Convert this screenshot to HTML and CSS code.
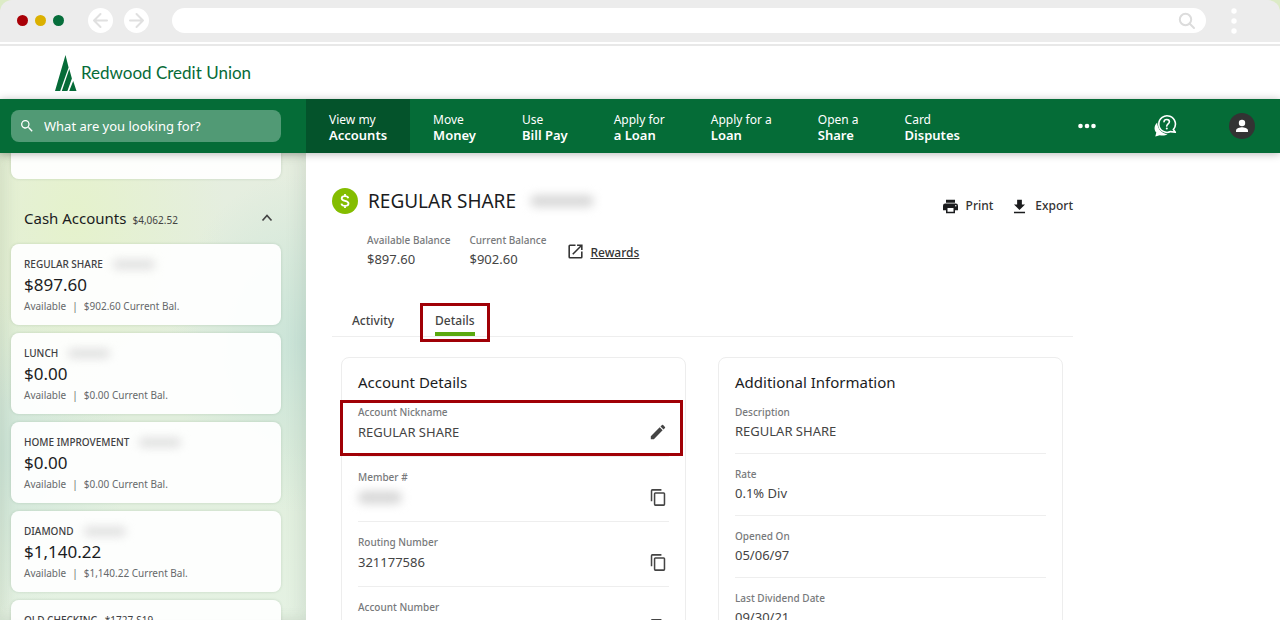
FILE: index.html
```html
<!DOCTYPE html>
<html lang="en">
<head>
<meta charset="utf-8">
<title>Redwood Credit Union</title>
<link rel="stylesheet" href="styles.css">
</head>
<body>
<div class="window">
  <div class="chrome-bar">
    <div class="lights"><span class="light red"></span><span class="light yellow"></span><span class="light green"></span></div>
    <div class="arrows">
      <button class="arrow" aria-label="Back"><svg width="25" height="25" viewBox="0 0 25 25"><path d="M19 12.500H6M12.500 6 6 12.500l6.500 6.500"/></svg></button>
      <button class="arrow" aria-label="Forward"><svg width="25" height="25" viewBox="0 0 25 25"><path d="M6 12.500h13M12.500 6l6.500 6.500-6.500 6.500"/></svg></button>
    </div>
    <div class="address">
      <input class="address-input" type="text" aria-label="Address">
      <svg width="18" height="18" viewBox="0 0 18 18"><circle cx="7.500" cy="7.500" r="5.700"/><path d="m11.500 11.500 4.500 4.500"/></svg>
    </div>
    <button class="kebab" aria-label="Menu"><svg width="6" height="26" viewBox="0 0 6 26"><circle cx="3" cy="3" r="2.700"/><circle cx="3" cy="13" r="2.700"/><circle cx="3" cy="23" r="2.700"/></svg></button>
  </div>
  <header class="brand">
    <a class="logo" href="#">
      <svg width="22" height="36" viewBox="0 0 22 36"><path d="M10.500 0 13.600 12.500 5.200 36H0zM14.300 14l2.600 9.500L12.400 36H6.800zM18.200 26 21.500 36H14.200z"/></svg>
      <span>Redwood Credit Union</span>
    </a>
  </header>
  <nav class="nav">
    <div class="nav-search">
      <label class="search">
        <svg width="16" height="16" viewBox="0 0 24 24"><path d="M15.500 14h-.8l-.3-.3A6.500 6.500 0 1 0 13.700 14.400l.3.300v.8l5 5 1.500-1.500zm-6 0a4.500 4.500 0 1 1 0-9 4.500 4.500 0 0 1 0 9z"/></svg>
        <input type="text" placeholder="What are you looking for?" aria-label="Search">
      </label>
    </div>
    <div class="nav-items">
      <a class="nav-item active" href="#">View my<b>Accounts</b></a>
      <a class="nav-item" href="#">Move<b>Money</b></a>
      <a class="nav-item" href="#">Use<b>Bill Pay</b></a>
      <a class="nav-item" href="#">Apply for<b>a Loan</b></a>
      <a class="nav-item" href="#">Apply for a<b>Loan</b></a>
      <a class="nav-item" href="#">Open a<b>Share</b></a>
      <a class="nav-item" href="#">Card<b>Disputes</b></a>
    </div>
    <div class="nav-tools">
      <button class="tool more" aria-label="More"><svg width="18" height="6" viewBox="0 0 18 6"><circle cx="2.500" cy="3" r="2.300"/><circle cx="9" cy="3" r="2.300"/><circle cx="15.500" cy="3" r="2.300"/></svg></button>
      <button class="tool" aria-label="Help"><svg width="24" height="24" viewBox="0 0 24 24"><path d="M4.200 8.500C1 11.500.8 16 3.300 18.600L2.300 22.500l4.500-1.300c3 .8 6 .2 7.700-1.300C9.500 20 4.500 15.500 4.200 8.500z"/><path class="line" d="M20.300 15.600A8.300 8.300 0 1 0 17.600 17.600L22.300 18.300z"/><path class="line" d="M11 7.700c.2-3 5.400-3 5.400.1 0 2-2.600 2.200-2.600 4.300"/><circle cx="13.800" cy="14.500" r="1"/></svg></button>
      <button class="tool" aria-label="Profile"><svg width="26" height="26" viewBox="0 0 26 26"><circle class="dark" cx="13" cy="13" r="13"/><circle cx="13" cy="10" r="3.200"/><path d="M7 19v-1.500c0-2.200 4-3.300 6-3.300s6 1.100 6 3.300V19z"/></svg></button>
    </div>
  </nav>
  <div class="body">
    <aside class="sidebar">
      <div class="acct-card cut"></div>
      <button class="group-head">
        <span class="group-name">Cash Accounts</span><span class="group-sum">$4,062.52</span>
        <svg width="12" height="12" viewBox="0 0 12 12"><path d="m1.500 8.500 4.500-5 4.500 5"/></svg>
      </button>
      <div class="accounts">
        <a class="acct-card" href="#"><span class="acct-name">REGULAR SHARE <i class="redacted"></i></span><span class="amount">$897.60</span><span class="sub"><span>Available</span><span>|</span><span>$902.60 Current Bal.</span></span></a>
        <a class="acct-card" href="#"><span class="acct-name">LUNCH <i class="redacted"></i></span><span class="amount">$0.00</span><span class="sub"><span>Available</span><span>|</span><span>$0.00 Current Bal.</span></span></a>
        <a class="acct-card" href="#"><span class="acct-name">HOME IMPROVEMENT <i class="redacted"></i></span><span class="amount">$0.00</span><span class="sub"><span>Available</span><span>|</span><span>$0.00 Current Bal.</span></span></a>
        <a class="acct-card" href="#"><span class="acct-name">DIAMOND <i class="redacted"></i></span><span class="amount">$1,140.22</span><span class="sub"><span>Available</span><span>|</span><span>$1,140.22 Current Bal.</span></span></a>
        <a class="acct-card" href="#"><span class="acct-name">OLD CHECKING <small>*1727-S19</small></span></a>
      </div>
    </aside>
    <main class="main">
      <div class="content">
        <div class="title-row">
          <svg class="coin" width="26" height="26" viewBox="0 0 26 26"><circle cx="13" cy="13" r="13"/><path d="M16.300 10.200C16 8.700 14.700 8.100 13 8.100c-1.800 0-3.300.8-3.300 2.300 0 3.300 6.800 1.600 6.800 5.100 0 1.600-1.500 2.400-3.500 2.400-1.900 0-3.300-.7-3.600-2.300M13 6v2M13 18v2"/></svg>
          <h1>REGULAR SHARE</h1><i class="redacted wide"></i>
          <div class="actions">
            <button class="action"><svg width="15" height="15" viewBox="2 2 20 20"><path d="M19 8H5a3 3 0 0 0-3 3v6h4v4h12v-4h4v-6a3 3 0 0 0-3-3zm-3 11H8v-5h8zm3-7a1 1 0 1 1 0-2 1 1 0 0 1 0 2zM18 3H6v4h12z"/></svg>Print</button>
            <button class="action"><svg width="15" height="15" viewBox="3 2 18 19"><path d="M19 9h-4V3H9v6H5l7 7zM5 18v2h14v-2z"/></svg>Export</button>
          </div>
        </div>
        <div class="balances">
          <dl><dt>Available Balance</dt><dd>$897.60</dd></dl>
          <dl><dt>Current Balance</dt><dd>$902.60</dd></dl>
          <a class="rewards" href="#"><svg width="15" height="15" viewBox="2.500 2.500 19 19"><path d="M19 19H5V5h7V3H5a2 2 0 0 0-2 2v14a2 2 0 0 0 2 2h14a2 2 0 0 0 2-2v-7h-2zM14 3v2h3.600l-9.800 9.800 1.400 1.400L19 6.400V10h2V3z"/></svg><span>Rewards</span></a>
        </div>
        <div class="tabs">
          <button class="tab">Activity</button>
          <button class="tab selected">Details</button>
        </div>
        <div class="panels">
          <section class="panel copyable">
            <h2>Account Details</h2>
            <div class="row marked"><div class="label">Account Nickname</div><div class="value">REGULAR SHARE<button class="icon" aria-label="Edit nickname"><svg width="16" height="16" viewBox="2 2 20 20"><path d="M3 17.200V21h3.800L17.800 9.900 14.100 6.200zM20.700 7a1 1 0 0 0 0-1.400l-2.300-2.300a1 1 0 0 0-1.400 0l-1.900 1.800 3.800 3.800z"/></svg></button></div></div>
            <div class="row"><div class="label">Member #</div><div class="value"><i class="redacted member"></i><button class="icon" aria-label="Copy member number"><svg width="16" height="17" viewBox="1 1 21 22"><path d="M16 1H4a2 2 0 0 0-2 2v14h2V3h12zM19 5H8a2 2 0 0 0-2 2v14a2 2 0 0 0 2 2h11a2 2 0 0 0 2-2V7a2 2 0 0 0-2-2zm0 16H8V7h11z"/></svg></button></div></div>
            <div class="row"><div class="label">Routing Number</div><div class="value">321177586<button class="icon" aria-label="Copy routing number"><svg width="16" height="17" viewBox="1 1 21 22"><path d="M16 1H4a2 2 0 0 0-2 2v14h2V3h12zM19 5H8a2 2 0 0 0-2 2v14a2 2 0 0 0 2 2h11a2 2 0 0 0 2-2V7a2 2 0 0 0-2-2zm0 16H8V7h11z"/></svg></button></div></div>
            <div class="row"><div class="label">Account Number</div><div class="value"><button class="icon" aria-label="Copy account number"><svg width="16" height="17" viewBox="1 1 21 22"><path d="M16 1H4a2 2 0 0 0-2 2v14h2V3h12zM19 5H8a2 2 0 0 0-2 2v14a2 2 0 0 0 2 2h11a2 2 0 0 0 2-2V7a2 2 0 0 0-2-2zm0 16H8V7h11z"/></svg></button></div></div>
          </section>
          <section class="panel">
            <h2>Additional Information</h2>
            <div class="row"><div class="label">Description</div><div class="value">REGULAR SHARE</div></div>
            <div class="row"><div class="label">Rate</div><div class="value">0.1% Div</div></div>
            <div class="row"><div class="label">Opened On</div><div class="value">05/06/97</div></div>
            <div class="row"><div class="label">Last Dividend Date</div><div class="value">09/30/21</div></div>
          </section>
        </div>
      </div>
    </main>
  </div>
</div>
</body>
</html>
```
FILE: styles.css
```css
* { box-sizing: border-box; }
body { margin: 0; background: #dcebc6; color: #1b1c1e; font: 12px/16px "Noto Sans", sans-serif; }
button, input { font: inherit; color: inherit; background: none; border: 0; padding: 0; }
a { color: inherit; text-decoration: none; }
svg { display: block; flex: none; }
h1, h2, dl, dd { margin: 0; }

.window { height: 100vh; display: flex; flex-direction: column; overflow: hidden; }

.chrome-bar { flex: none; height: 42px; display: flex; align-items: center; padding: 0 43px 1px 17px; background: #ececec; border-radius: 12px 12px 0 0; }
.lights { display: flex; gap: 7px; }
.light { width: 11px; height: 11px; border-radius: 50%; }
.red { background: #a90007; }
.yellow { background: #dbb000; }
.green { background: #066e3b; }
.arrows { display: flex; gap: 11px; margin: 0 23px 0 24px; }
.arrow { border-radius: 50%; background: #fff; }
.arrow path { fill: none; stroke: #e0e0e0; stroke-width: 2; stroke-linecap: round; stroke-linejoin: round; }
.address { flex: 1; height: 25px; display: flex; align-items: center; padding: 0 10px 0 16px; background: #fff; border-radius: 13px; }
.address-input { flex: 1; min-width: 0; outline: 0; }
.address svg { fill: none; stroke: #dcdcdc; stroke-width: 2; stroke-linecap: round; }
.kebab { margin-left: 25px; fill: #fff; }

.brand { flex: none; height: 57px; padding: 11px 55px 0; background: #fff; border-top: 2px solid #fff; box-shadow: inset 0 2px #e8e8e8; }
.logo { display: inline-flex; align-items: center; gap: 4px; color: #066b38; font: 17px/36px Lato, sans-serif; }
.logo svg { fill: #066b38; }

.nav { flex: none; height: 54px; display: flex; background: #056c37; color: #fff; box-shadow: 0 1px 8px rgba(0,0,0,.28); z-index: 2; }
.nav-search { width: 306px; padding: 11px 25px 11px 11px; }
.search { display: flex; align-items: center; gap: 9px; height: 32px; padding-left: 8px; border-radius: 8px; background: #519a75; font-size: 13px; }
.search svg { fill: #fff; }
.search input { flex: 1; min-width: 0; outline: 0; }
.search input::placeholder { color: #fff; opacity: 1; }
.nav-items { display: flex; }
.nav-item { display: flex; flex-direction: column; justify-content: center; padding: 2px 23px 0; white-space: nowrap; }
.nav-item b { font-size: 13px; line-height: 15px; font-weight: 600; }
.active { background: #04532b; }
.nav-tools { margin-left: auto; display: flex; align-items: center; gap: 52px; padding-right: 25px; }
.more { margin-right: 5px; }
.tool { fill: #fff; }
.tool .line { fill: none; stroke: #fff; stroke-width: 1.600; stroke-linejoin: round; stroke-linecap: round; }
.tool .dark { fill: #333; }

.body { flex: 1; min-height: 0; display: flex; }
.sidebar { flex: none; width: 306px; padding: 0 25px 0 11px; overflow: hidden;
  background:
    radial-gradient(ellipse 150px 210px at 75px 65px, #e5f2cc, rgba(229,242,204,0)),
    radial-gradient(ellipse 130px 170px at 300px 190px, #cae4d8, rgba(202,228,216,0)),
    radial-gradient(ellipse 130px 160px at 0 300px, #cfe6da, rgba(207,230,218,0)),
    linear-gradient(#e6eee0, #e0eedc 60%, #e5f2e3);
  box-shadow: inset -8px 0 14px rgba(100,120,110,.1), inset 8px 0 14px rgba(100,120,80,.1); }
.acct-card { display: flex; flex-direction: column; padding: 13px 13px 11px; border-radius: 8px; background: rgba(255,255,255,.93); box-shadow: 0 0 3px rgba(60,100,70,.2); }
.cut { height: 26px; padding: 0; border-radius: 0 0 8px 8px; }
.group-head { display: flex; align-items: center; width: 100%; height: 65px; padding: 13px 8px 0 13px; text-align: left; }
.group-name { font-size: 15px; line-height: 20px; }
.group-sum { margin-left: 6px; padding-top: 3px; font-size: 10px; color: #444; }
.group-head svg { margin-left: auto; fill: none; stroke: #444; stroke-width: 1.700; }
.accounts { display: flex; flex-direction: column; gap: 8px; }
.acct-name { display: flex; align-items: center; gap: 4px; font-size: 10px; line-height: 14px; font-weight: 500; color: #3f4143; white-space: nowrap; }
.acct-name small { font-size: 10px; font-weight: 400; margin-left: 3px; }
.amount { font-size: 17px; line-height: 27px; }
.sub { display: flex; gap: 6px; font-size: 10px; line-height: 16px; color: #66696b; }
.redacted { display: block; width: 42px; height: 9px; margin-left: 6px; border-radius: 6px; background: #dedede; filter: blur(5px); }
.wide { width: 64px; height: 12px; margin-left: 14px; background: #d8d8d8; }

.main { flex: 1; min-width: 0; padding: 34px 26px 0; background: #fff; overflow: hidden; }
.content { max-width: 741px; }
.title-row { display: flex; align-items: center; height: 28px; }
.coin { margin-right: 10px; fill: #84bd00; }
.coin path { fill: none; stroke: #fff; stroke-width: 1.800; }
h1 { font-size: 19px; line-height: 28px; font-weight: 400; }
.actions { margin-left: auto; display: flex; gap: 19px; padding-top: 10px; }
.action { display: flex; align-items: center; gap: 8px; font-weight: 500; color: #333; }
.action svg { fill: #1b1c1e; }
.balances { display: flex; gap: 19px; padding: 17px 0 0 35px; }
dt { font-size: 10px; font-weight: 500; color: #77797b; }
dd { font-size: 13px; line-height: 23px; color: #444; }
.rewards { display: flex; align-items: center; gap: 7px; font-weight: 500; color: #333; margin-left: 3px; }
.rewards span { text-decoration: underline; padding-top: 2px; }
.rewards svg { fill: #333; }
.tabs { display: flex; gap: 11px; height: 66px; padding: 32px 0 0 5px; border-bottom: 1px solid #eee; }
.tab { position: relative; height: 39px; padding: 0 15px 4px; font-weight: 500; color: #444; }
.selected { border: 3px solid #a00006; padding: 0 12px 4px; }
.selected::after { content: ""; position: absolute; left: 12px; right: 12px; bottom: 3px; height: 4px; background: #5aa80e; }
.panels { display: grid; grid-template-columns: 1fr 1fr; gap: 32px; padding: 20px 10px 0 9px; }
.panel { padding: 15px 16px; border: 1px solid #ededed; border-radius: 8px; }
h2 { font-size: 15px; line-height: 19px; font-weight: 400; }
.row { position: relative; padding: 12px 0 11px; border-bottom: 1px solid #eee; }
.label { font-size: 10px; line-height: 16px; font-weight: 500; color: #77797b; }
.value { display: flex; align-items: center; line-height: 22px; font-size: 13px; color: #444; }
.copyable .row { padding-bottom: 12px; }
.copyable .value { height: 24px; }
.icon { margin: 0 3px 0 auto; fill: #444; }
.marked::before { content: ""; position: absolute; inset: 8px -14px 0 -18px; border: 3px solid #a00006; pointer-events: none; }
.member { width: 44px; height: 13px; margin-left: 0; background: #d8d8d8; }
```
